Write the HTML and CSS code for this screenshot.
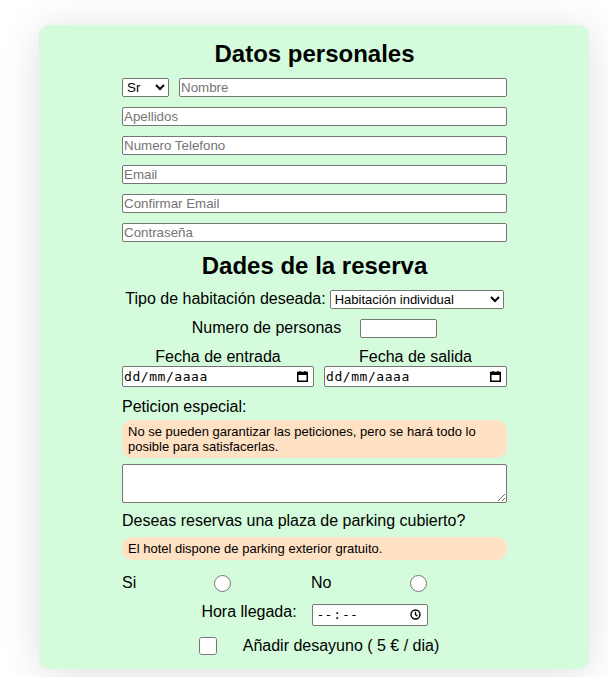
FILE: index.html
```html
<!DOCTYPE html>
<html lang="es">
<head>
<meta charset="utf-8">
<title>Reserva</title>
<link rel="stylesheet" href="styles.css">
</head>
<body>
<form class="card">
  <h2 class="title">Datos personales</h2>
  <div class="name-row">
    <select class="sel sel-trat"><option>Sr</option><option>Sra</option></select>
    <input class="txt" type="text" placeholder="Nombre">
  </div>
  <input class="txt field" type="text" placeholder="Apellidos">
  <input class="txt field" type="text" placeholder="Numero Telefono">
  <input class="txt field" type="text" placeholder="Email">
  <input class="txt field" type="text" placeholder="Confirmar Email">
  <input class="txt field" type="password" placeholder="Contraseña">

  <h2 class="title sec">Dades de la reserva</h2>
  <div class="center-row tipo">
    <label>Tipo de habitación deseada:</label>
    <select class="sel sel-hab"><option>Habitación individual</option><option>Habitación doble</option></select>
  </div>
  <div class="center-row num">
    <label>Numero de personas</label>
    <input class="txt num-input" type="text">
  </div>
  <div class="dates">
    <div class="date-col">
      <label class="date-lbl">Fecha de entrada</label>
      <div class="fake-field date-box"><span>dd/mm/aaaa</span>
        <svg class="ico" width="11" height="11" viewBox="0 0 11 11"><rect x="0.75" y="1.5" width="9.5" height="8.75" fill="none" stroke="#000" stroke-width="1.5"/><rect x="0" y="1" width="11" height="3" fill="#000"/><rect x="2.3" y="0" width="1.4" height="2" fill="#000"/><rect x="7.3" y="0" width="1.4" height="2" fill="#000"/></svg>
      </div>
    </div>
    <div class="date-col">
      <label class="date-lbl">Fecha de salida</label>
      <div class="fake-field date-box"><span>dd/mm/aaaa</span>
        <svg class="ico" width="11" height="11" viewBox="0 0 11 11"><rect x="0.75" y="1.5" width="9.5" height="8.75" fill="none" stroke="#000" stroke-width="1.5"/><rect x="0" y="1" width="11" height="3" fill="#000"/><rect x="2.3" y="0" width="1.4" height="2" fill="#000"/><rect x="7.3" y="0" width="1.4" height="2" fill="#000"/></svg>
      </div>
    </div>
  </div>

  <p class="lbl">Peticion especial:</p>
  <div class="note">No se pueden garantizar las peticiones, pero se hará todo lo posible para satisfacerlas.</div>
  <textarea class="area"></textarea>

  <p class="lbl lbl2">Deseas reservas una plaza de parking cubierto?</p>
  <div class="note note2">El hotel dispone de parking exterior gratuito.</div>

  <div class="radios">
    <label>Si</label>
    <input class="radio" type="radio" name="parking">
    <label>No</label>
    <input class="radio" type="radio" name="parking">
  </div>

  <div class="hora">
    <label>Hora llegada:</label>
    <div class="fake-field time-box"><span class="time-txt"><span>--</span><span class="sep">:</span><span>--</span></span>
      <svg class="ico" width="11" height="11" viewBox="0 0 11 11"><circle cx="5.5" cy="5.5" r="4.5" fill="none" stroke="#000" stroke-width="1.4"/><path d="M5.5 2.8 V5.6 L7.4 7.2" fill="none" stroke="#000" stroke-width="1.3"/></svg>
    </div>
  </div>

  <div class="check">
    <input class="box" type="checkbox">
    <label>Añadir desayuno ( 5 € / dia)</label>
  </div>
</form>
</body>
</html>
```
FILE: styles.css
```css
body {
  margin: 0;
  background: #fff;
  font-family: "Liberation Sans", Arial, sans-serif;
  font-size: 16px;
  color: #000;
}

.card {
  width: 550px;
  box-sizing: border-box;
  margin: 25px 0 8px 39px;
  padding: 15px 82px 14px 83px;
  background: #d4fcdc;
  border-radius: 10px;
  box-shadow: 0 4px 40px rgba(0, 0, 0, 0.13);
  display: flex;
  flex-direction: column;
}

.title {
  margin: 0;
  font-size: 24px;
  line-height: 28px;
  font-weight: bold;
  text-align: center;
}

.title.sec {
  margin-top: 10px;
}

.txt {
  box-sizing: border-box;
  height: 19px;
  margin: 0;
  padding: 0 1px;
  border: 1px solid #767676;
  border-radius: 2px;
  background: #fff;
  font: 13.33px "Liberation Sans", Arial, sans-serif;
  color: #000;
}

.txt::placeholder {
  color: #757575;
}

.sel {
  box-sizing: border-box;
  height: 19px;
  margin: 0;
  font: 13.33px "Liberation Sans", Arial, sans-serif;
  color: #000;
}

.name-row {
  display: flex;
  gap: 10px;
  margin-top: 10px;
}

.name-row .txt {
  flex: 1;
  min-width: 0;
}

.sel-trat {
  width: 47px;
}

.field {
  width: 100%;
  margin-top: 10px;
}

.center-row {
  display: flex;
  justify-content: center;
  align-items: center;
  margin-top: 10px;
  line-height: 18.4px;
}

.tipo {
  gap: 4px;
}

.sel-hab {
  width: 174px;
  font-size: 13px;
}

.num {
  gap: 19px;
}

.num-input {
  width: 77px;
}

.dates {
  display: grid;
  grid-template-columns: 192px 183px;
  column-gap: 10px;
  margin-top: 9px;
}

.date-col {
  display: flex;
  flex-direction: column;
}

.date-lbl {
  text-align: center;
  line-height: 19px;
}

.fake-field {
  box-sizing: border-box;
  display: flex;
  align-items: center;
  justify-content: space-between;
  border: 1px solid #767676;
  border-radius: 2px;
  background: #fff;
  font: 13px "DejaVu Sans Mono", "Liberation Mono", monospace;
  color: #000;
}

.date-box {
  height: 21px;
  padding: 0 5px 0 1px;
  letter-spacing: 0.55px;
}

.ico {
  display: block;
  flex: none;
}

.lbl {
  margin: 11px 0 0;
  line-height: 18.4px;
}

.lbl2 {
  margin-top: 9px;
}

.note {
  margin-top: 4px;
  padding: 4px 6px;
  background: #ffe1c4;
  border-radius: 10px;
  font-size: 13px;
  line-height: 15px;
}

.note2 {
  margin-top: 6px;
}

.area {
  box-sizing: border-box;
  width: 100%;
  height: 39px;
  margin: 6px 0 0;
  border: 1px solid #767676;
  border-radius: 2px;
  background: #fff;
}

.radios {
  display: grid;
  grid-template-columns: 92px 97px 99px 17px;
  align-items: center;
  height: 19px;
  margin-top: 14px;
  line-height: 18.4px;
}

.radio {
  width: 17px;
  height: 17px;
  margin: 0;
}

.hora {
  display: flex;
  justify-content: center;
  align-items: flex-start;
  gap: 15px;
  margin-top: 10px;
  line-height: 18.4px;
}

.time-box {
  width: 116px;
  height: 22px;
  margin-top: 1px;
  padding: 0 6px 0 4px;
}

.time-txt {
  display: flex;
}

.sep {
  margin: 0 1px;
}

.check {
  display: flex;
  justify-content: center;
  align-items: center;
  gap: 26px;
  margin-top: 11px;
  padding-left: 9px;
  line-height: 18.4px;
}

.box {
  width: 18px;
  height: 18px;
  margin: 0;
}
```
